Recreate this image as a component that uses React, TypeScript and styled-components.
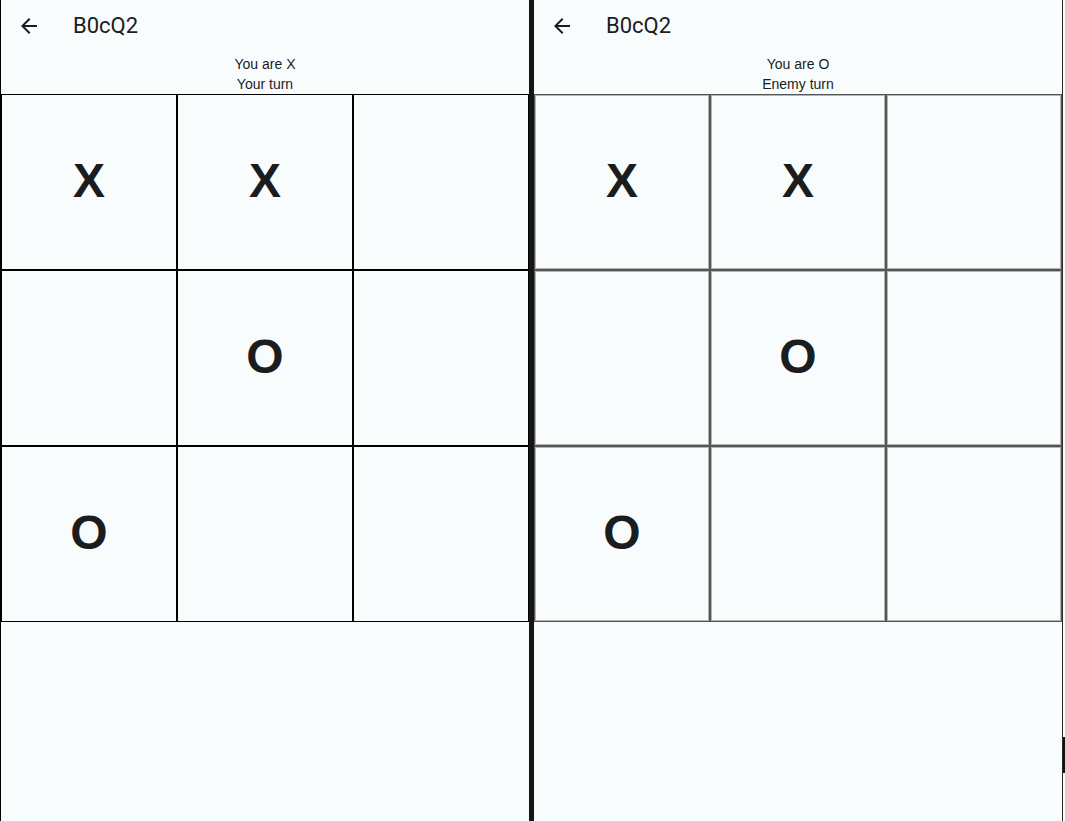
import React from 'react'
import styled, { createGlobalStyle } from 'styled-components'

type Mark = 'X' | 'O' | ''

interface PlayerView {
  room: string;
  you: 'X' | 'O';
  turnLabel: string;
  locked: boolean;
}

const board: Mark[] = ['X', 'X', '', '', 'O', '', 'O', '', '']

const views: PlayerView[] = [
  { room: 'B0cQ2', you: 'X', turnLabel: 'Your turn', locked: false },
  { room: 'B0cQ2', you: 'O', turnLabel: 'Enemy turn', locked: true },
]

const GlobalStyle = createGlobalStyle`
  html, body {
    margin: 0;
    padding: 0;
    background: #f8fcfd;
  }
  body {
    font-family: "Liberation Sans", Arial, sans-serif;
    color: #1a1c1e;
  }
`

const Screen = styled.div`
  position: relative;
  display: flex;
  width: 1065px;
  height: 821px;
  overflow: hidden;
  background: #f8fcfd;
`

const Pane = styled.div<{ $locked: boolean }>`
  display: flex;
  flex-direction: column;
  width: 528px;
  height: 100%;
  border-left: ${({ $locked }) => ($locked ? 'none' : '1px solid #000')};
  border-right: ${({ $locked }) => ($locked ? '1px solid #2a2a2a' : 'none')};
`

const Divider = styled.div`
  width: 5px;
  height: 100%;
  background: #161616;
  flex-shrink: 0;
`

const AppBar = styled.div`
  display: flex;
  align-items: center;
  height: 52px;
  padding-left: 16px;
  gap: 32px;
`

const BackButton = styled.button`
  display: flex;
  align-items: center;
  justify-content: center;
  width: 24px;
  height: 24px;
  padding: 0;
  border: none;
  background: transparent;
  color: #1a1c1e;
  cursor: pointer;
`

const Title = styled.h1`
  margin: 0;
  font-family: Roboto, "Liberation Sans", sans-serif;
  font-size: 22px;
  line-height: 28px;
  font-weight: 400;
  color: #1a1c1e;
`

const Status = styled.div`
  text-align: center;
  font-size: 14px;
  line-height: 20px;
  padding-top: 2px;
  color: #1a1c1e;
`

const Board = styled.div`
  display: grid;
  grid-template-columns: repeat(3, 176px);
  grid-template-rows: repeat(3, 176px);
`

const Cell = styled.button<{ $locked: boolean }>`
  box-sizing: border-box;
  display: flex;
  align-items: center;
  justify-content: center;
  padding: 0 0 3px;
  margin: 0;
  background: #f8fcfd;
  border: 1px solid ${({ $locked }) => ($locked ? '#555' : '#000')};
  box-shadow: ${({ $locked }) => ($locked ? 'inset 0 0 0 1px #b4b4b4' : 'none')};
  font-family: "Liberation Sans", Arial, sans-serif;
  font-size: 48px;
  font-weight: 700;
  color: #1a1c1e;
  cursor: ${({ $locked }) => ($locked ? 'default' : 'pointer')};
`

const ScrollThumb = styled.div`
  position: absolute;
  left: 1063px;
  top: 737px;
  width: 2px;
  height: 36px;
  background: #111;
`

const ArrowBack = () => (
  <svg width="24" height="24" viewBox="0 0 24 24" fill="currentColor">
    <path d="M20 11H7.83l5.59-5.59L12 4l-8 8 8 8 1.41-1.41L7.83 13H20v-2z" />
  </svg>
)

function GameView({ view }: { view: PlayerView }) {
  return (
    <Pane $locked={view.locked}>
      <AppBar>
        <BackButton aria-label="Back">
          <ArrowBack />
        </BackButton>
        <Title>{view.room}</Title>
      </AppBar>
      <Status>
        <div>You are {view.you}</div>
        <div>{view.turnLabel}</div>
      </Status>
      <Board>
        {board.map((mark, i) => (
          <Cell key={i} $locked={view.locked} disabled={view.locked}>
            {mark}
          </Cell>
        ))}
      </Board>
    </Pane>
  )
}

export default function App() {
  return (
    <>
      <GlobalStyle />
      <Screen>
        <GameView view={views[0]} />
        <Divider />
        <GameView view={views[1]} />
        <ScrollThumb />
      </Screen>
    </>
  )
}
